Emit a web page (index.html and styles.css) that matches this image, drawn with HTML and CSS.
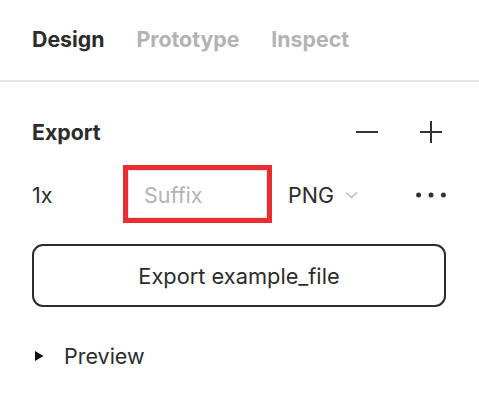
FILE: index.html
```html
<!DOCTYPE html>
<html>
<head>
<meta charset="utf-8">
<link rel="stylesheet" href="styles.css">
</head>
<body>
<div class="panel">
  <div class="tabs">
    <span class="tab active">Design</span>
    <span class="tab">Prototype</span>
    <span class="tab">Inspect</span>
  </div>
  <div class="section">
    <div class="header">
      <span class="title">Export</span>
      <div class="actions">
        <svg class="icon" width="22" height="24" viewBox="0 0 22 24"><path d="M0 12H22" stroke="#333" stroke-width="2"/></svg>
        <svg class="icon" width="22" height="24" viewBox="0 0 22 24"><path d="M0 12H22M11 1V23" stroke="#333" stroke-width="2"/></svg>
      </div>
    </div>
    <div class="row">
      <span class="scale">1x</span>
      <div class="suffix-wrap"><div class="suffix">Suffix</div></div>
      <div class="format">
        <span>PNG</span>
        <svg width="13" height="8" viewBox="0 0 13 8"><path d="M1 1.5L6.5 6.5L12 1.5" fill="none" stroke="#bdbdbd" stroke-width="1.4"/></svg>
      </div>
      <svg class="dots" width="30" height="6" viewBox="0 0 30 6"><circle cx="2.6" cy="3" r="2.5" fill="#333"/><circle cx="15" cy="3" r="2.5" fill="#333"/><circle cx="27.4" cy="3" r="2.5" fill="#333"/></svg>
    </div>
    <button class="export-btn">Export example_file</button>
    <div class="preview">
      <svg width="9" height="10" viewBox="0 0 9 10"><path d="M0 0L8.5 5L0 10Z" fill="#111"/></svg>
      <span>Preview</span>
    </div>
  </div>
</div>
</body>
</html>
```
FILE: styles.css
```css
* { box-sizing: border-box; }
body {
  margin: 0;
  background: #fff;
  font-family: Inter, "Noto Sans", sans-serif;
  color: #2c2c2c;
}
.tabs {
  height: 82px;
  display: flex;
  align-items: center;
  gap: 32px;
  padding: 0 32px 2px;
  border-bottom: 2px solid #e5e5e5;
  font-size: 21.3px;
  font-weight: 700;
}
.tab { color: #b3b3b3; }
.tab.active { color: #2c2c2c; }
.section {
  padding: 30px 33px 0 32px;
}
.header {
  height: 40px;
  display: flex;
  align-items: center;
  justify-content: space-between;
}
.title {
  font-size: 21.3px;
  font-weight: 700;
}
.actions {
  display: flex;
  gap: 42px;
  margin-right: 4px;
}
.icon { display: block; }
.row {
  margin-top: 13px;
  height: 58px;
  display: flex;
  align-items: center;
  font-size: 21.5px;
}
.scale { width: 91px; padding-top: 2px; }
.suffix-wrap {
  width: 149px;
  height: 58px;
  border: 5px solid #ea2c33;
}
.suffix {
  height: 100%;
  border: 1px solid #e6e6e6;
  padding: 2px 0 0 15px;
  display: flex;
  align-items: center;
  color: #b3b3b3;
}
.format {
  margin-left: 16px;
  padding-top: 2px;
  display: flex;
  align-items: center;
  gap: 11px;
}
.dots { margin-left: auto; display: block; margin-top: 2px; }
.export-btn {
  display: block;
  width: 100%;
  margin-top: 21px;
  height: 63px;
  border: 2px solid #2c2c2c;
  border-radius: 11px;
  background: #fff;
  font-family: Inter, "Noto Sans", sans-serif;
  font-size: 21.8px;
  color: #2c2c2c;
}
.preview {
  margin-top: 37px;
  height: 24px;
  display: flex;
  align-items: center;
  gap: 20px;
  padding-left: 3px;
  font-size: 21.5px;
}
.preview svg { display: block; }
```
